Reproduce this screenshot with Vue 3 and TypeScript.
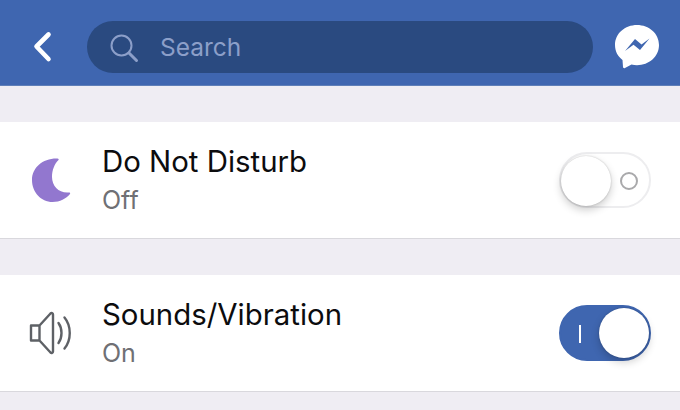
<script setup lang="ts">
import { ref } from 'vue'

const dnd = ref(false)
const sounds = ref(true)
</script>

<template>
  <div class="screen">
    <header class="topbar">
      <button class="back" aria-label="Back">
        <svg width="22" height="32" viewBox="0 0 22 32">
          <path d="M17.5 3.5 L5.5 15.5 L17.5 28" fill="none" stroke="#fff" stroke-width="4.6" stroke-linecap="round" stroke-linejoin="round" />
        </svg>
      </button>
      <div class="search">
        <svg class="search-icon" width="30" height="30" viewBox="0 0 30 30">
          <circle cx="12.5" cy="12.5" r="10" fill="none" stroke="#8c9fc9" stroke-width="2" />
          <path d="M20 20 L27.5 27.5" stroke="#8c9fc9" stroke-width="3" stroke-linecap="round" />
        </svg>
        <span class="placeholder">Search</span>
      </div>
      <svg class="messenger" width="44" height="48" viewBox="0 0 44 48">
        <path d="M22 4 C10 4 0 12.5 0 24 C0 30.5 3 35.5 7.5 39 L8 46 C8 47 9 47.5 10 47 L16.5 43.5 C18.3 44 20 44.2 22 44.2 C34 44.2 44 35.5 44 24 C44 12.5 34 4 22 4 Z" fill="#fff" />
        <path d="M10 30 L20 18 L26.5 23.5 L34.5 17.5 L25 29 L18.5 23.7 Z" fill="#3f66b0" />
      </svg>
    </header>

    <div class="spacer"></div>

    <section class="row">
      <div class="icon">
        <svg width="44" height="46" viewBox="0 0 44 46">
          <path d="M28.5 1.5 C14 1 3 10.5 3 23 C3 35 12 45 23.5 45 C31 45 37 41.5 41 37 C41.5 36 41 35.5 40 35.5 C30 36.5 23 29 23 20 C23 13 25.5 7 29.5 3 C30 2.2 29.5 1.6 28.5 1.5 Z" fill="#9277cf" />
        </svg>
      </div>
      <div class="labels">
        <div class="title">Do Not Disturb</div>
        <div class="sub">Off</div>
      </div>
      <button class="toggle" :class="{ on: dnd }" @click="dnd = !dnd">
        <span class="mark-off"></span>
        <span class="knob"></span>
      </button>
    </section>

    <div class="spacer"></div>

    <section class="row">
      <div class="icon">
        <svg width="46" height="44" viewBox="0 0 46 44">
          <path d="M2 14.5 H10.5 L21.5 2.5 C22.5 1.6 24 2.2 24 3.6 V40.4 C24 41.8 22.5 42.4 21.5 41.5 L10.5 29.5 H2 Z M10.5 14.5 V29.5" fill="none" stroke="#5e6166" stroke-width="2.4" stroke-linejoin="round" />
          <path d="M29.5 12 C33.5 17.5 33.5 26.5 29.5 32 M35.5 6.5 C42.5 15 42.5 29 35.5 37.5" fill="none" stroke="#5e6166" stroke-width="2.4" stroke-linecap="round" />
        </svg>
      </div>
      <div class="labels">
        <div class="title">Sounds/Vibration</div>
        <div class="sub">On</div>
      </div>
      <button class="toggle" :class="{ on: sounds }" @click="sounds = !sounds">
        <span class="mark-on"></span>
        <span class="knob"></span>
      </button>
    </section>

    <div class="spacer"></div>
  </div>
</template>

<style>
html,
body {
  margin: 0;
  background: #efedf3;
}
</style>

<style scoped>
.screen {
  width: 680px;
  height: 410px;
  overflow: hidden;
  background: #efedf3;
  font-family: "Inter", "Liberation Sans", sans-serif;
}

.topbar {
  height: 86px;
  box-sizing: border-box;
  padding: 21px 21px 12px 31px;
  display: flex;
  align-items: flex-start;
  background: #3f66b0;
  border-bottom: 1px solid #5f7fb8;
}

.back {
  width: 22px;
  height: 32px;
  margin-top: 10px;
  padding: 0;
  border: 0;
  background: none;
  flex: none;
}

.search {
  width: 506px;
  height: 52px;
  margin-left: 34px;
  padding-left: 22px;
  box-sizing: border-box;
  display: flex;
  align-items: center;
  border-radius: 26px;
  background: #2a4a80;
  flex: none;
}

.search-icon {
  flex: none;
  margin-top: 2px;
}

.placeholder {
  margin-left: 21px;
  font-size: 24.5px;
  color: #8c9fc9;
}

.messenger {
  flex: none;
  margin-left: 22px;
}

.spacer {
  height: 36px;
}

.row {
  height: 117px;
  box-sizing: border-box;
  display: flex;
  align-items: center;
  background: #fff;
  border-bottom: 1px solid #d9d8dd;
}

.icon {
  width: 102px;
  padding-left: 29px;
  box-sizing: border-box;
  display: flex;
  flex: none;
}

.labels {
  flex: 1;
}

.title {
  font-size: 29.4px;
  line-height: 38px;
  color: #0c0c0e;
}

.sub {
  margin-top: 2px;
  font-size: 25px;
  line-height: 34px;
  color: #6f7074;
}

.toggle {
  position: relative;
  width: 92px;
  height: 56px;
  margin-right: 29px;
  padding: 0;
  box-sizing: border-box;
  flex: none;
  border: 2px solid #ededef;
  border-radius: 28px;
  background: #fff;
}

.toggle.on {
  border-color: #3f66b0;
  background: #3f66b0;
}

.knob {
  position: absolute;
  top: 2px;
  left: 0;
  width: 50px;
  height: 50px;
  border-radius: 50%;
  background: #fff;
  box-shadow: 0 4px 9px rgba(0, 0, 0, 0.2), 0 0 2px rgba(0, 0, 0, 0.22);
}

.toggle.on .knob {
  left: auto;
  right: 0;
  top: 1px;
}

.mark-off {
  position: absolute;
  top: 18px;
  right: 11px;
  width: 18px;
  height: 18px;
  box-sizing: border-box;
  border: 2px solid #a9a9ab;
  border-radius: 50%;
}

.mark-on {
  position: absolute;
  top: 18px;
  left: 18px;
  width: 2px;
  height: 18px;
  background: #fff;
}
</style>
